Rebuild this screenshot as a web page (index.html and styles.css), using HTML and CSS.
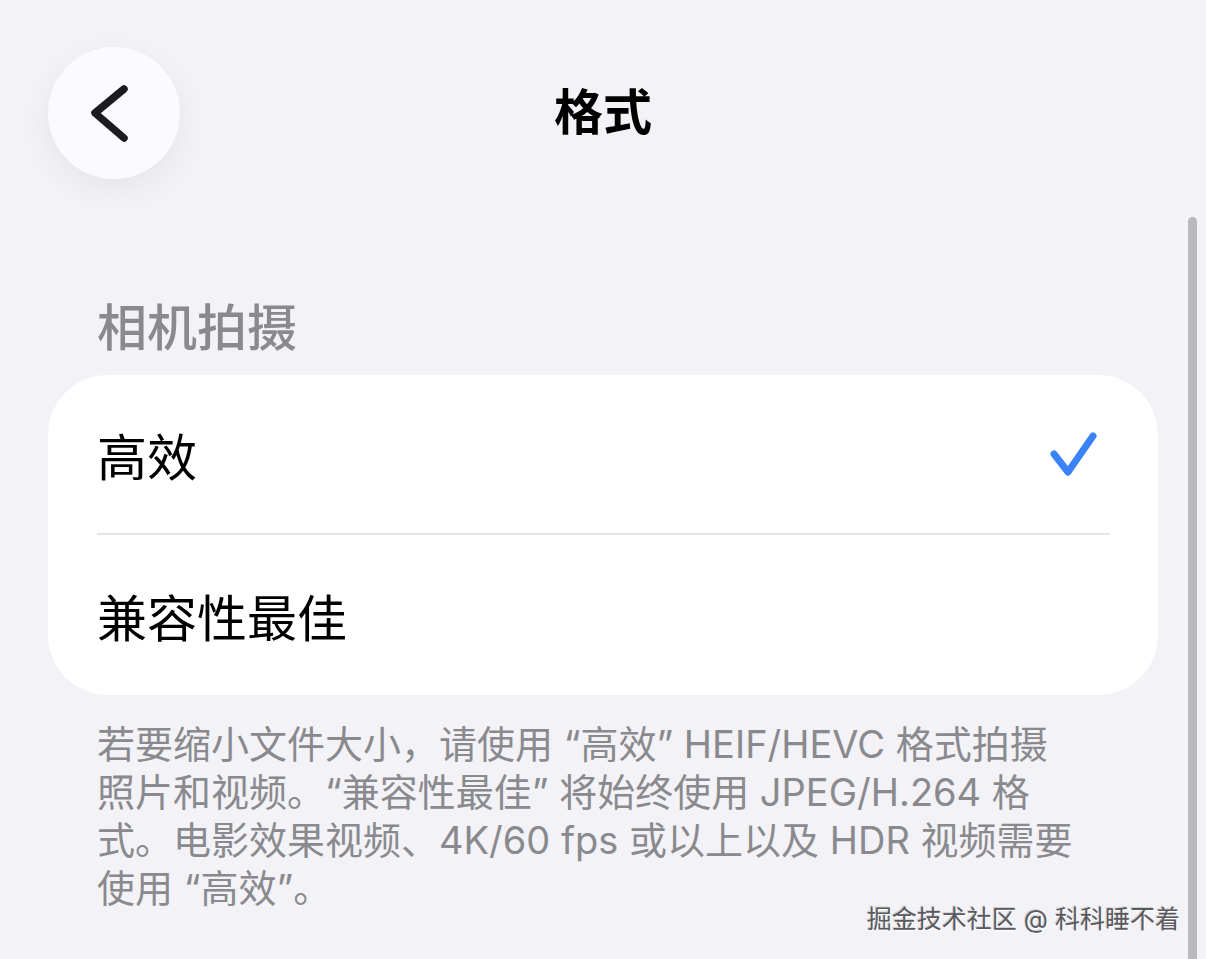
FILE: index.html
```html
<!DOCTYPE html>
<html lang="zh-CN">
<head>
    <meta charset="UTF-8">
    <meta name="viewport" content="width=device-width, initial-scale=1.0">
    <title>格式</title>
    <link rel="stylesheet" href="styles.css">
</head>
<body>
    <div class="nav-bar">
        <button class="back-btn" aria-label="返回">
            <svg width="132" height="132" viewBox="0 0 132 132">
                <path d="M76 42 L47 66 L76 91" fill="none" stroke="#1c1c1e" stroke-width="7.5" stroke-linecap="round" stroke-linejoin="round"/>
            </svg>
        </button>
        <h1 class="nav-title">格式</h1>
        <div></div>
    </div>

    <h2 class="section-header">相机拍摄</h2>
    <div class="card">
        <div class="row">
            <span>高效</span>
            <svg class="check" width="50" height="46" viewBox="0 0 50 46">
                <path d="M5 23 L19 41 L44 5" fill="none" stroke="#3a82f7" stroke-width="7" stroke-linecap="round" stroke-linejoin="round"/>
            </svg>
        </div>
        <div class="separator"></div>
        <div class="row">
            <span>兼容性最佳</span>
        </div>
    </div>
    <p class="section-footer">若要缩小文件大小，请使用 “高效” HEIF/HEVC 格式拍摄<br>照片和视频。“兼容性最佳” 将始终使用 JPEG/H.264 格<br>式。电影效果视频、4K/60 fps 或以上以及 HDR 视频需要<br>使用 “高效”。</p>

    <div class="scrollbar"></div>
    <div class="watermark">掘金技术社区 @ 科科睡不着</div>
</body>
</html>
```

FILE: styles.css
```css
body {
    margin: 0;
    padding: 0;
    background-color: #f2f2f7;
    font-family: "Inter", "Noto Sans CJK SC", sans-serif;
    color: #000;
    width: 1206px;
    height: 959px;
    overflow: hidden;
    position: relative;
}
.nav-bar {
    display: grid;
    grid-template-columns: 132px 1fr 132px;
    align-items: center;
    padding: 47px 48px 0;
    height: 132px;
}
.back-btn {
    width: 132px;
    height: 132px;
    border: none;
    padding: 0;
    border-radius: 50%;
    background-color: #fbfbfd;
    box-shadow: 0 10px 34px rgba(0, 0, 0, 0.06);
    display: flex;
}
.nav-title {
    margin: 0;
    text-align: center;
    font-size: 49px;
    font-weight: 700;
    line-height: 60px;
}
.section-header {
    margin: 119px 0 17px;
    padding-left: 97px;
    font-size: 50px;
    font-weight: 500;
    line-height: 60px;
    color: #8a8a8e;
}
.card {
    margin: 0 48px;
    background-color: #fff;
    border-radius: 60px;
}
.row {
    display: flex;
    align-items: center;
    justify-content: space-between;
    padding: 0 59px 0 49px;
    height: 158px;
    font-size: 50px;
}
.row + .separator + .row {
    height: 160px;
}
.separator {
    height: 2px;
    margin: 0 48px 0 49px;
    background-color: #e4e4e9;
}
.section-footer {
    margin: 25px 0 0;
    padding-left: 97px;
    font-size: 38px;
    line-height: 48px;
    color: #8a8a8e;
}
.scrollbar {
    position: absolute;
    left: 1188px;
    top: 217px;
    bottom: 0;
    width: 9px;
    border-radius: 5px 5px 0 0;
    background-color: #b9b9be;
}
.watermark {
    position: absolute;
    right: 26px;
    top: 900px;
    font-size: 25px;
    line-height: 38px;
    color: #5a5a5e;
    text-shadow: 1px 1px 0 #fff, -1px -1px 0 #d0d0d4;
}
```
